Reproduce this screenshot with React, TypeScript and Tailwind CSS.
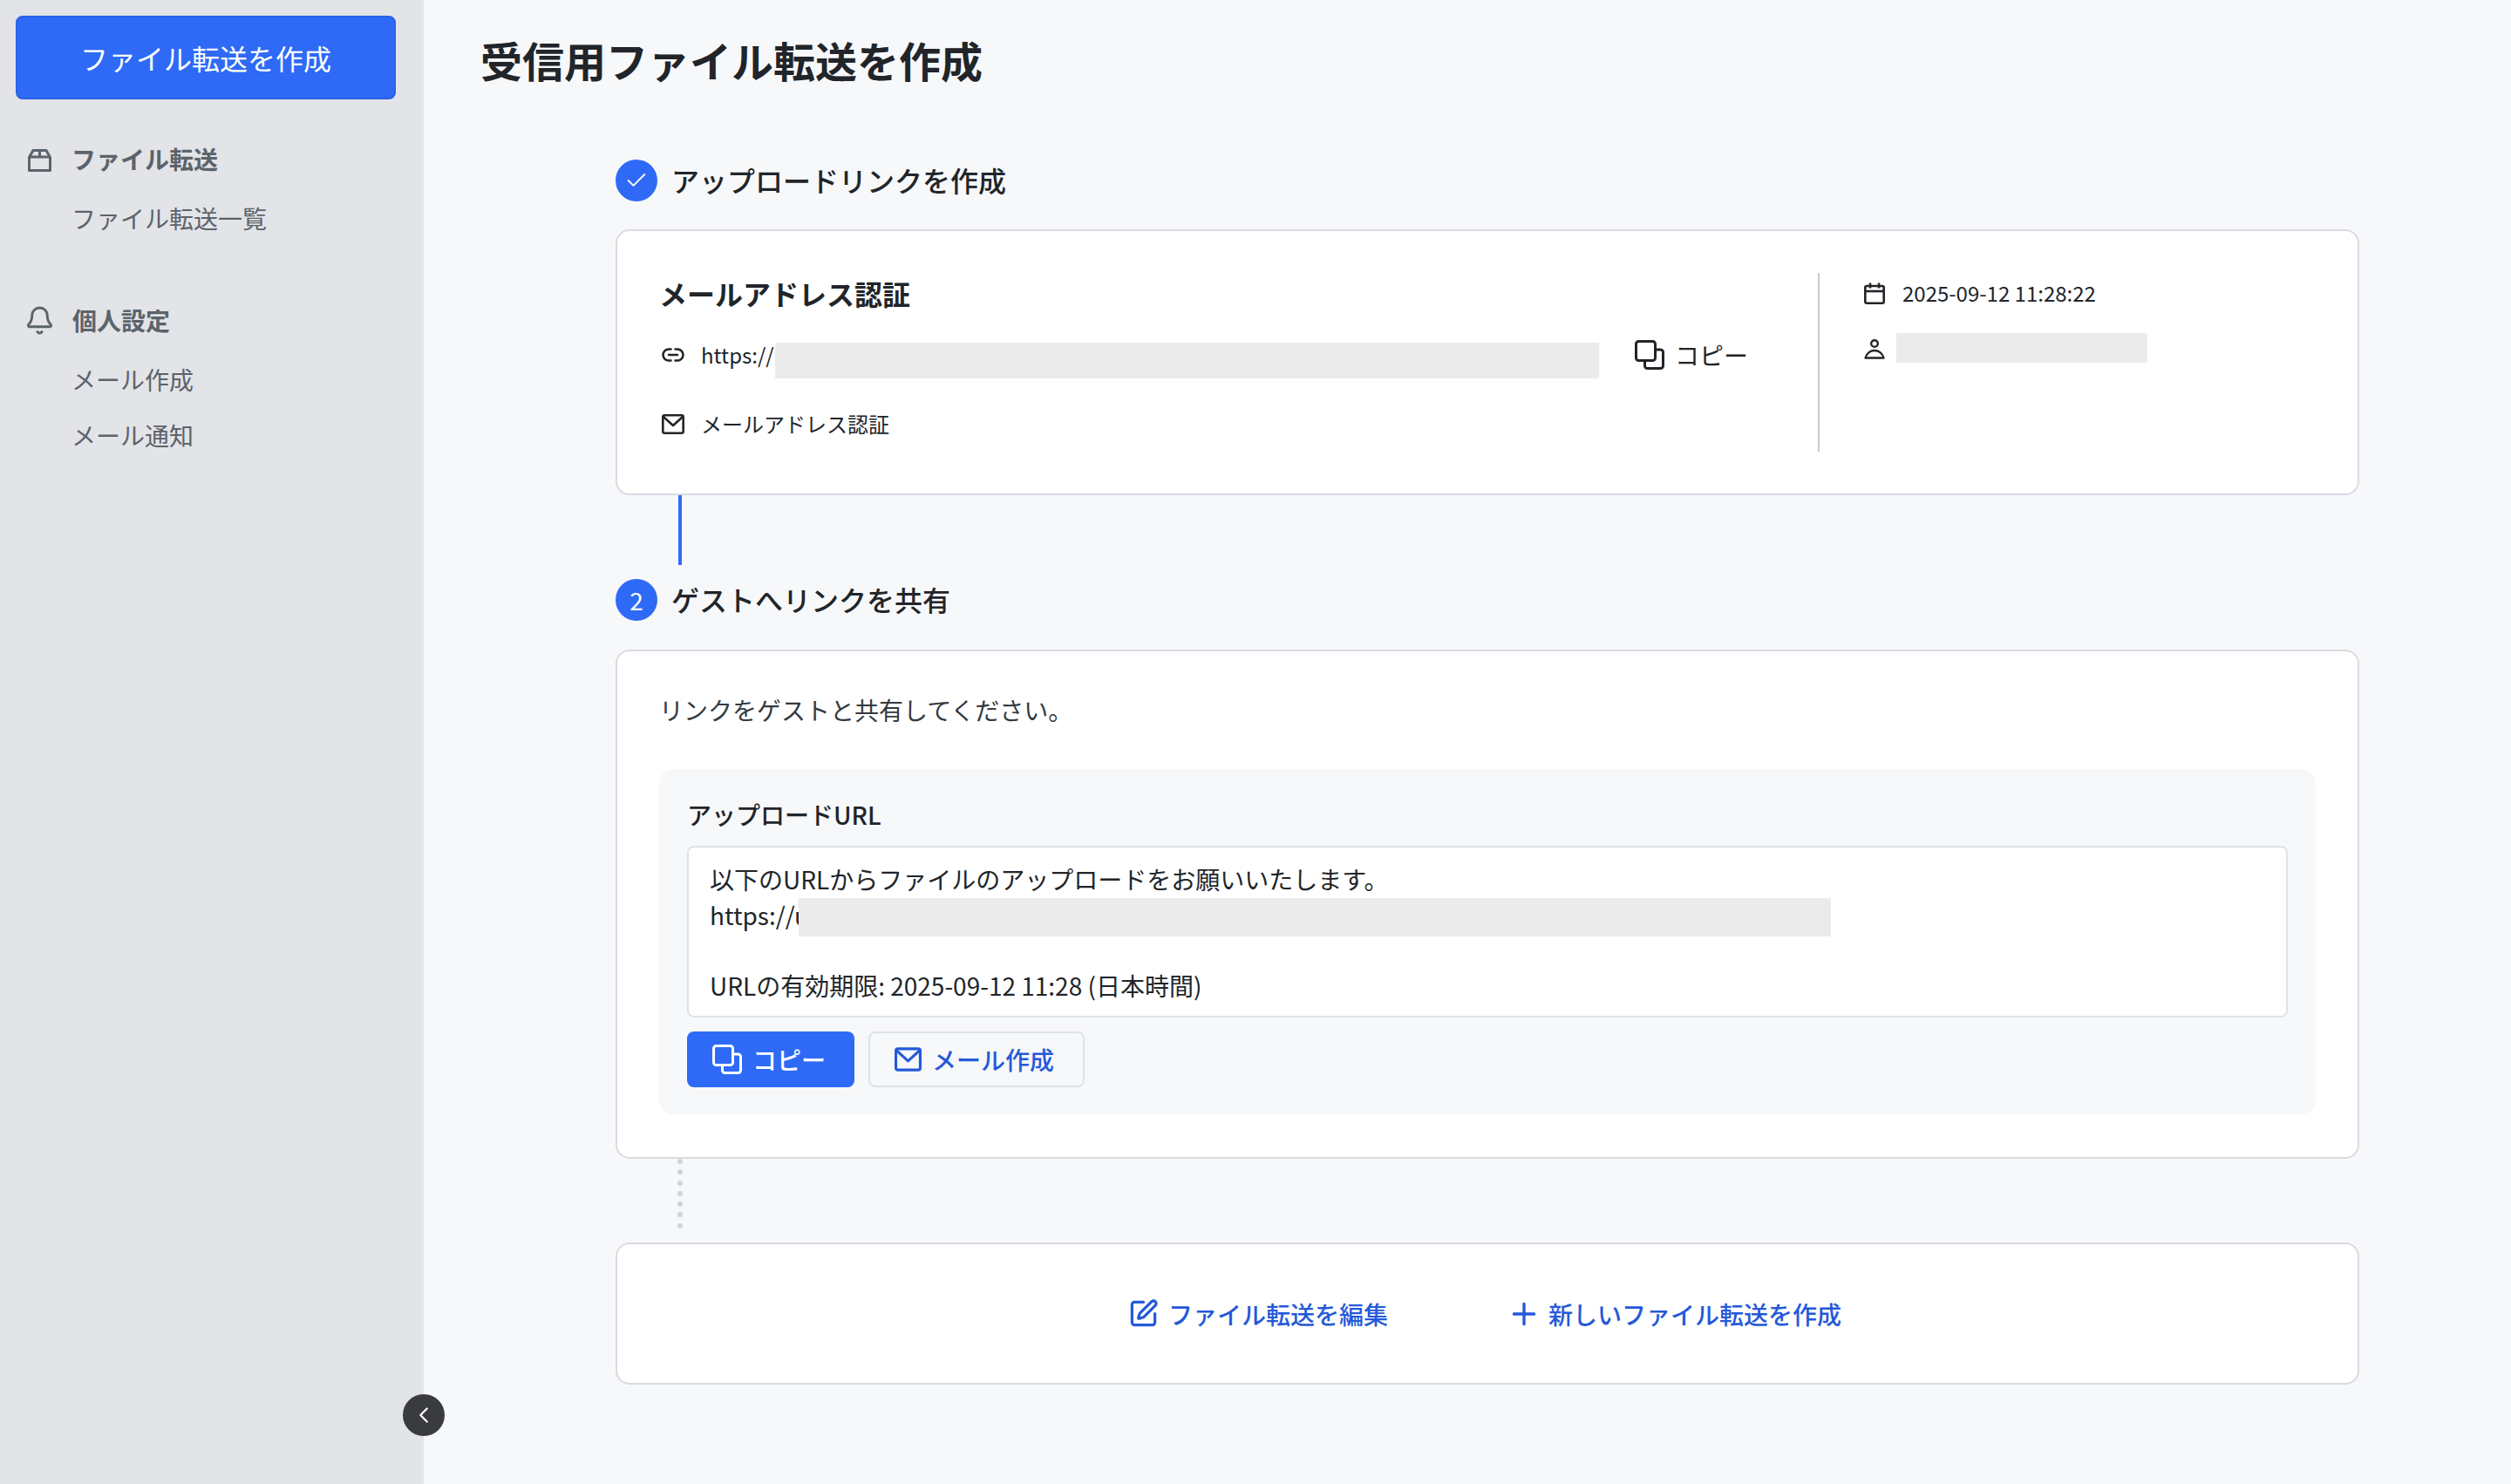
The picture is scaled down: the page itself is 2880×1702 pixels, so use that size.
import { Bell, Check, ChevronLeft, Plus, SquarePen } from "lucide-react";

type IconProps = { className?: string };

const BoxIcon = ({ className }: IconProps) => (
  <svg viewBox="0 0 27 26" fill="none" stroke="currentColor" strokeWidth="3" strokeLinejoin="round" className={className}>
    <path d="M1.5 9.5 L6 1.5 H21 L25.5 9.5 V24.5 H1.5 Z" />
    <path d="M1.5 9 H25.5" />
    <path d="M13.5 1.5 V9" />
  </svg>
);

const CopyIcon = ({ className }: IconProps) => (
  <svg viewBox="0 0 34 34" fill="none" stroke="currentColor" strokeWidth="3" strokeLinejoin="round" strokeLinecap="round" className={className}>
    <rect x="1.5" y="1.5" width="22" height="22" rx="3" />
    <path d="M23.5 11 H29.5 A3 3 0 0 1 32.5 14 V29.5 A3 3 0 0 1 29.5 32.5 H14.5 A3 3 0 0 1 11.5 29.5 V23.5" />
  </svg>
);

const LinkIcon = ({ className }: IconProps) => (
  <svg viewBox="0 0 26 16" fill="none" stroke="currentColor" strokeWidth="2.6" strokeLinecap="round" className={className}>
    <path d="M10.5 1.5 H8 a6.5 6.5 0 0 0 0 13 h2.5" />
    <path d="M15.5 1.5 H18 a6.5 6.5 0 0 1 0 13 h-2.5" />
    <path d="M8 8 H18" />
  </svg>
);

const MailIcon = ({ className }: IconProps) => (
  <svg viewBox="0 0 26 23" fill="none" stroke="currentColor" strokeWidth="2.6" strokeLinejoin="round" className={className}>
    <rect x="1.3" y="1.3" width="23.4" height="20.4" rx="2" />
    <path d="M2 3 L13 13 L24 3" />
  </svg>
);

const CalendarIcon = ({ className }: IconProps) => (
  <svg viewBox="0 0 24 25" fill="none" stroke="currentColor" strokeWidth="2.6" strokeLinejoin="round" className={className}>
    <rect x="1.3" y="4" width="21.4" height="19.7" rx="2" />
    <path d="M1.3 10 H22.7" />
    <path d="M7 0.5 V6.5" />
    <path d="M17 0.5 V6.5" />
  </svg>
);

const PersonIcon = ({ className }: IconProps) => (
  <svg viewBox="0 0 24 23" fill="none" stroke="currentColor" strokeWidth="2.4" strokeLinejoin="round" className={className}>
    <circle cx="12" cy="5" r="3.8" />
    <path d="M1.5 21.5 C3 16 7.5 13 12 13 S21 16 22.5 21.5 Z" />
  </svg>
);

const Redacted = ({ className }: IconProps) => <div className={`bg-[#ebebeb] ${className ?? ""}`} />;

const StepHeader = ({ mark, label }: { mark: React.ReactNode; label: string }) => (
  <div className="flex h-12 items-center gap-4">
    <div className="flex h-12 w-12 items-center justify-center rounded-full bg-[#2e6af6] text-[28px] text-white">{mark}</div>
    <h2 className="mb-[2px] text-[32px] leading-none font-medium text-[#212529]">{label}</h2>
  </div>
);

export default function App() {
  return (
    <div className="relative flex h-screen overflow-hidden bg-[#f7f8fa] [font-family:'Noto_Sans_CJK_JP','Noto_Sans',sans-serif]">
      {/* sidebar */}
      <aside className="w-[486px] shrink-0 bg-[#e2e4e8] pt-[18px] pr-[32px] pl-[18px]">
        <button className="h-[96px] w-full rounded-lg border-2 border-[#2a62e6] bg-[#2e6af6] text-[32px] text-white">
          ファイル転送を作成
        </button>

        <div className="mt-[52px] pl-[14px] text-[#5c636a]">
          <div className="flex h-8 items-center gap-[24px]">
            <BoxIcon className="mt-[3px] h-[26px] w-[27px] shrink-0" />
            <span className="-ml-[1px] text-[28px] font-bold">ファイル転送</span>
          </div>
          <div className="mt-[36px] flex flex-col gap-8 pl-[50px] text-[28px] leading-8">
            <a>ファイル転送一覧</a>
          </div>
        </div>

        <div className="mt-[85px] pl-[14px] text-[#5c636a]">
          <div className="flex h-8 items-center gap-[20px]">
            <Bell className="-ml-[4px] h-[35px] w-[35px] shrink-0" strokeWidth={2} />
            <span className="text-[28px] font-bold">個人設定</span>
          </div>
          <div className="mt-[36px] flex flex-col gap-8 pl-[50px] text-[28px] leading-8">
            <a>メール作成</a>
            <a>メール通知</a>
          </div>
        </div>
      </aside>

      {/* collapse */}
      <button className="absolute top-[1599px] left-[462px] flex h-12 w-12 items-center justify-center rounded-full bg-[#3a3b3f] text-white">
        <ChevronLeft className="-ml-[1px] h-[30px] w-[30px]" strokeWidth={1.8} />
      </button>

      <main className="min-w-0 flex-1 pl-[65px]">
        <h1 className="mt-[44px] text-[48px] leading-[48px] font-bold text-[#212529]">受信用ファイル転送を作成</h1>

        <div className="mt-[91px] ml-[155px] w-[2000px]">
          <StepHeader mark={<Check className="h-7 w-7" strokeWidth={1.6} />} label="アップロードリンクを作成" />

          <section className="mt-8 flex h-[305px] rounded-2xl border-2 border-[#d9dbe1] bg-white px-[50px] py-[47px] text-[24px] text-[#212529]">
            <div className="w-[1327px] shrink-0">
              <h3 className="-ml-[2px] text-[32px] leading-[48px] font-bold">メールアドレス認証</h3>
              <div className="mt-[33px] flex h-[41px] items-center">
                <LinkIcon className="mb-[14px] ml-[1px] h-4 w-[26px] shrink-0" />
                <span className="mb-[14px] ml-[19px] w-[85px]">https://</span>
                <Redacted className="h-[41px] w-[945px]" />
                <button className="mb-[14px] ml-[41px] flex items-center gap-[12px] text-[28px]">
                  <CopyIcon className="h-[34px] w-[34px]" />
                  コピー
                </button>
              </div>
              <div className="mt-[40px] flex h-6 items-center">
                <MailIcon className="ml-[1px] h-[23px] w-[26px] shrink-0" />
                <span className="ml-[19px]">メールアドレス認証</span>
              </div>
            </div>
            <div className="my-[1px] flex-1 border-l-2 border-[#c9c9c9] pl-[51px]">
              <div className="mt-[11px] flex h-6 items-center gap-[20px]">
                <CalendarIcon className="h-[25px] w-6 shrink-0" />
                <span>2025-09-12 11:28:22</span>
              </div>
              <div className="mt-[34px] flex h-[34px] items-center gap-[13px]">
                <PersonIcon className="mt-[3px] h-[23px] w-6 shrink-0" />
                <Redacted className="h-[34px] w-[288px]" />
              </div>
            </div>
          </section>

          <div className="ml-[72px] h-[80px] w-1 bg-[#2e6af6]" />

          <div className="mt-4">
            <StepHeader mark="2" label="ゲストへリンクを共有" />
          </div>

          <section className="mt-[33px] h-[584px] rounded-2xl border-2 border-[#d9dbe1] bg-white px-[48px] text-[28px] text-[#212529]">
            <p className="mt-[47px] leading-10 text-[#343a40]">リンクをゲストと共有してください。</p>
            <div className="mt-[48px] rounded-2xl bg-[#f7f8fa] px-8 pt-8 pb-[31px]">
              <label className="block leading-10 font-medium">アップロードURL</label>
              <div className="mt-4 h-[197px] rounded-lg border-2 border-[#dee2e6] bg-white px-6 py-[16px] leading-[40.6px]">
                <div>以下のURLからファイルのアップロードをお願いいたします。</div>
                <div className="relative h-[40.6px]">
                  https://u
                  {/* mask over the rest of the url */}
                  <Redacted className="absolute top-[1px] left-[102px] h-[44px] w-[1184px]" />
                </div>
                <div className="h-[40.6px]" />
                <div>URLの有効期限: 2025-09-12 11:28 (日本時間)</div>
              </div>
              <div className="mt-4 flex gap-4">
                <button className="flex h-16 w-[192px] items-center gap-[12px] rounded-lg bg-[#2e6af6] pl-[29px] font-medium text-white">
                  <CopyIcon className="h-[34px] w-[34px]" />
                  コピー
                </button>
                <button className="flex h-16 w-[248px] items-center gap-[12px] rounded-lg border-2 border-[#dee2e6] pl-[28px] font-medium text-[#2559d9]">
                  <MailIcon className="h-[28px] w-[31px]" />
                  メール作成
                </button>
              </div>
            </div>
          </section>

          <div className="ml-[71px] flex h-[96px] flex-col gap-[6.3px]">
            {[0, 1, 2, 3, 4, 5, 6].map((i) => (
              <div key={i} className="h-[6px] w-[6px] rounded-full bg-[#ced4da]" />
            ))}
          </div>

          <section className="flex h-[163px] items-center justify-center gap-[136px] rounded-2xl border-2 border-[#d9dbe1] bg-white pr-[6px] text-[28px] font-medium text-[#2559d9]">
            <a className="flex items-center gap-[11px]">
              <SquarePen className="h-[35px] w-[35px]" strokeWidth={2.2} />
              ファイル転送を編集
            </a>
            <a className="flex items-center gap-[8px]">
              <Plus className="h-10 w-10" strokeWidth={2} />
              新しいファイル転送を作成
            </a>
          </section>
        </div>
      </main>
    </div>
  );
}
